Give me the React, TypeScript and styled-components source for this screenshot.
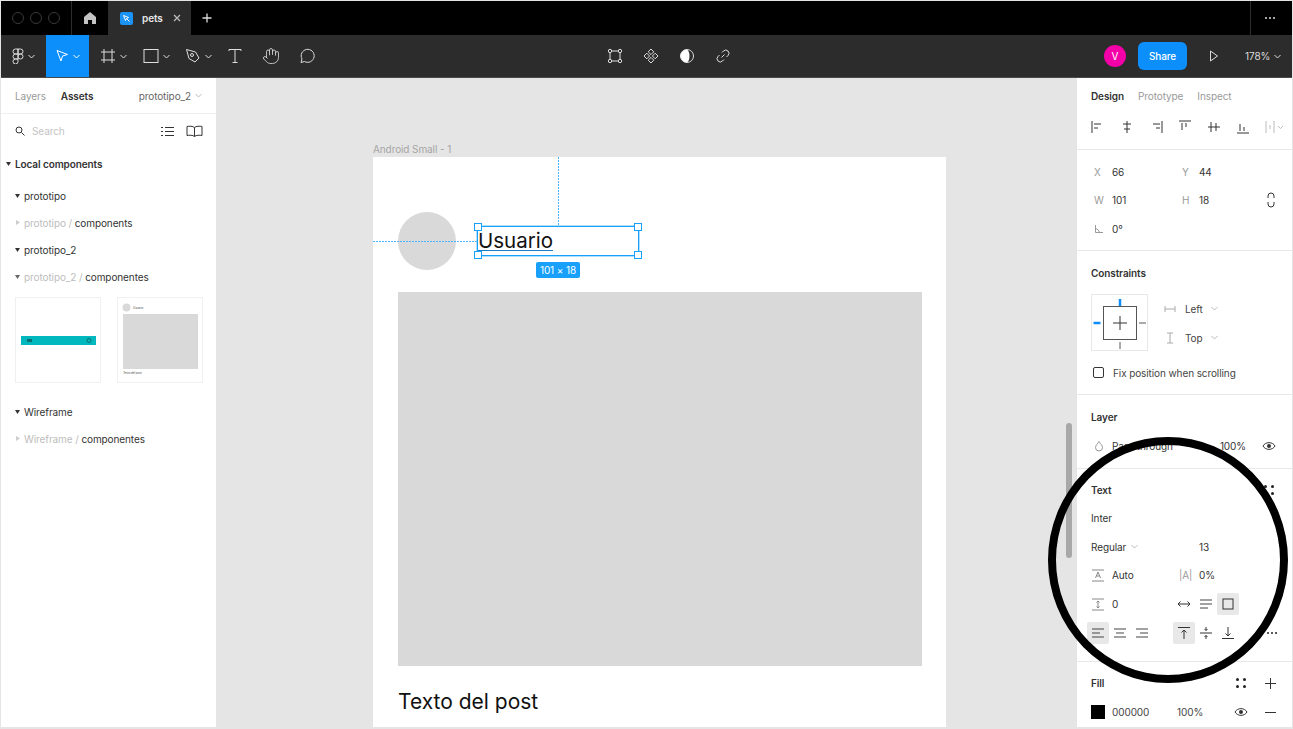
import React from 'react';
import styled, { createGlobalStyle } from 'styled-components';
import { Hand } from 'lucide-react';

const Global = createGlobalStyle`
  html, body { margin: 0; padding: 0; background: #e5e5e5; }
  body { font-family: Inter, "Liberation Sans", sans-serif; -webkit-font-smoothing: antialiased; }
  * { box-sizing: border-box; }
`;

const Page = styled.div`
  position: relative; width: 1293px; height: 729px; overflow: hidden;
  padding: 1px 1px 2px; display: flex; flex-direction: column; background: #e5e5e5;
  font-size: 10px; letter-spacing: -0.1px; color: #333;
`;

/* tab bar */
const TabBar = styled.div`height: 34px; background: #000; display: flex; align-items: stretch; flex: none;`;
const Lights = styled.div`width: 71px; display: flex; align-items: center; gap: 6px; padding-left: 11px; border-right: 1px solid #2c2c2c;`;
const Light = styled.i`width: 12px; height: 12px; border-radius: 50%; border: 1px solid #3a3a3a; display: block;`;
const HomeTab = styled.div`width: 36px; display: flex; align-items: center; justify-content: center;`;
const FileTab = styled.div`width: 83px; background: #2c2c2c; display: flex; align-items: center; padding-left: 12px; color: #e8e8e8; font-weight: 600; gap: 9px; font-size: 10px;`;
const FileIcon = styled.span`width: 13px; height: 13px; border-radius: 2px; background: #1b92f5; display: flex; align-items: center; justify-content: center;`;
const CloseMark = styled.span`margin-left: 1px; display: flex;`;
const AddTab = styled.div`width: 32px; display: flex; align-items: center; justify-content: center;`;
const TabSpacer = styled.div`flex: 1;`;
const MoreTab = styled.div`width: 42px; padding-right: 4px; border-left: 1px solid #2c2c2c; display: flex; align-items: center; justify-content: center; gap: 2px;`;
const Dot = styled.i<{ $c?: string }>`width: 2px; height: 2px; border-radius: 50%; background: ${p => p.$c || '#ddd'}; display: block;`;

/* toolbar */
const ToolBar = styled.div`height: 43px; background: #2c2c2c; display: flex; align-items: stretch; flex: none; border-bottom: 1px solid #4a4a4a; color: #fff;`;
const ToolGroup = styled.div<{ $w?: number }>`display: flex; align-items: stretch; ${p => p.$w ? `width: ${p.$w}px;` : ''}`;
const Tool = styled.div<{ $w: number; $active?: boolean }>`
  width: ${p => p.$w}px; display: flex; align-items: center; justify-content: center; gap: 4px;
  background: ${p => p.$active ? '#0d8ffb' : 'transparent'};
`;
const Avatar = styled.div`width: 22px; height: 22px; border-radius: 50%; background: #f400a8; color: #fff; display: flex; align-items: center; justify-content: center; font-size: 10px; align-self: center;`;
const Share = styled.div`width: 49px; height: 28px; margin-left: 12px; background: #0d8ffb; border-radius: 6px; font-size: 10px; color: #fff; display: flex; align-items: center; justify-content: center; align-self: center; font-weight: 500;`;
const Zoomer = styled.div`display: flex; align-items: center; gap: 4px; font-size: 10px; color: #ddd; margin-left: 4px;`;

/* body */
const Body = styled.div`flex: 1; display: flex; min-height: 0;`;
const Left = styled.aside`width: 215px; background: #fff; flex: none; display: flex; flex-direction: column;`;
const LeftHead = styled.div`height: 36px; display: flex; align-items: center; padding: 0 14px; border-bottom: 1px solid #eee; gap: 15px; flex: none;`;
const Tab = styled.span<{ $on?: boolean }>`font-weight: ${p => p.$on ? 600 : 400}; color: ${p => p.$on ? '#333' : '#9a9a9a'};`;
const PageSel = styled.span`margin-left: auto; color: #666; display: flex; align-items: center; gap: 4px;`;
const SearchRow = styled.div`height: 34px; display: flex; align-items: center; padding: 0 13px 0 14px; color: #c4c4c4; gap: 7px;`;
const SearchTools = styled.span`margin-left: auto; display: flex; gap: 12px; align-items: center;`;
const Tree = styled.div<{ $ind: number; $bold?: boolean; $mt?: number }>`
  height: 27px; display: flex; align-items: center; padding-left: ${p => p.$ind}px; gap: 4px; margin-top: ${p => p.$mt || 0}px;
  font-weight: ${p => p.$bold ? 600 : 400}; color: #333; white-space: pre;
`;
const Faint = styled.span`color: #bdbdbd;`;
const Thumbs = styled.div`display: flex; gap: 16px; padding: 7px 0 0 14px; height: 108px; flex: none;`;
const Thumb = styled.div`width: 86px; height: 86px; border: 1px solid #f0f0f0; background: #fff; display: flex;`;

/* canvas */
const Canvas = styled.main`flex: 1; position: relative; background: #e5e5e5; overflow: hidden; min-width: 0;`;
const FrameLabel = styled.span`position: absolute; left: 157px; top: 65px; color: #a6a6a6;`;
const Frame = styled.div`position: absolute; left: 157px; top: 79px; width: 573px; height: 680px; background: #fff;`;
const Circle = styled.div`position: absolute; left: 25px; top: 55px; width: 58px; height: 58px; border-radius: 50%; background: #d9d9d9;`;
const Photo = styled.div`position: absolute; left: 25px; top: 135px; width: 524px; height: 374px; background: #d9d9d9;`;
const PostText = styled.div`position: absolute; left: 25px; top: 532px; font-size: 21px; letter-spacing: 0; color: #111; white-space: nowrap;`;
const UserText = styled.div`position: absolute; left: 105px; top: 70px; font-size: 20.5px; letter-spacing: 0; line-height: 27px; color: #111; text-decoration: underline; text-decoration-color: #1a7fc4; text-decoration-thickness: 1px; text-underline-offset: 2px;`;
const Selection = styled.div`position: absolute; left: 104px; top: 69px; width: 162px; height: 30px; border: 1px solid #18a0fb; box-shadow: 0 0 0 .6px #7cc8fc;`;
const Handle = styled.i<{ $x: 'l' | 'r'; $y: 't' | 'b' }>`
  position: absolute; width: 8px; height: 8px; background: #fff; border: 1px solid #18a0fb;
  ${p => p.$x === 'l' ? 'left: -4px;' : 'right: -4px;'}
  ${p => p.$y === 't' ? 'top: -4px;' : 'bottom: -4px;'}
`;
const GuideH = styled.div`position: absolute; left: 0; top: 84px; width: 104px; height: 1px; background: repeating-linear-gradient(90deg, #4db5fb 0 2px, transparent 2px 3px);`;
const GuideV = styled.div`position: absolute; left: 185px; top: 0; height: 69px; width: 1px; background: repeating-linear-gradient(180deg, #4db5fb 0 2px, transparent 2px 3px);`;
const SizeTag = styled.div`position: absolute; left: 163px; top: 105px; width: 44px; height: 16px; background: #18a0fb; color: #fff; font-size: 10px; border-radius: 2px; display: flex; align-items: center; justify-content: center;`;
const ScrollThumb = styled.div`position: absolute; right: 5px; top: 345px; width: 6px; height: 135px; border-radius: 3px; background: #a8a8a8;`;

/* right */
const Right = styled.aside`width: 215px; background: #fff; flex: none; display: flex; flex-direction: column;`;
const Section = styled.section<{ $pt?: number; $pb?: number; $last?: boolean }>`
  padding: ${p => p.$pt ?? 7}px 0 ${p => p.$pb ?? 7}px 14px; flex: none;
  border-bottom: ${p => p.$last ? 'none' : '1px solid #e8e8e8'};
`;
const RightTabs = styled.div`height: 36px; display: flex; align-items: center; gap: 14px;`;
const AlignRow = styled.div`height: 26px; display: flex; align-items: center; gap: 13px; margin-left: -1px;`;
const Row = styled.div<{ $h?: number }>`
  height: ${p => p.$h ?? 29}px; display: grid; grid-template-columns: 21px 67px 20px 1fr 34px; align-items: center; color: #333; padding-right: 15px;
  & > svg { justify-self: end; margin-right: 1px; }
`;
const Lbl = styled.span<{ $flush?: boolean }>`color: #9a9a9a; display: flex; align-items: center; white-space: nowrap; padding-left: ${p => p.$flush ? 0 : 3}px;`;
const Title = styled.div<{ $pr?: number }>`height: 29px; display: flex; align-items: center; justify-content: space-between; font-weight: 600; color: #333; padding-right: ${p => p.$pr ?? 16}px;`;
const Constraint = styled.div`display: flex; height: 71px; padding-top: 7px; gap: 16px;`;
const ConstraintBox = styled.div`width: 57px; height: 57px; border: 1px solid #e8e8e8; flex: none;`;
const ConstraintOpts = styled.div`display: flex; flex-direction: column;`;
const ConstraintOpt = styled.div`height: 29px; display: flex; align-items: center; gap: 8px; color: #444;`;
const OptName = styled.span`margin-left: 1px;`;
const Check = styled.i`width: 11px; height: 11px; border: 1px solid #333; border-radius: 2px; display: block;`;
const FixRow = styled.div`height: 29px; display: flex; align-items: center; gap: 9px; padding-left: 2px; color: #444;`;
const NoWrap = styled.span`white-space: nowrap;`;
const PctCell = styled.span`text-align: right; white-space: nowrap; margin-right: -3px;`;
const IconBtn = styled.span<{ $on?: boolean }>`width: 22px; height: 22px; border-radius: 2px; display: flex; align-items: center; justify-content: center; background: ${p => p.$on ? '#e8e8e8' : 'transparent'};`;
const Cluster = styled.span<{ $col?: string; $ml?: number; $gap?: number; $end?: boolean }>`
  display: flex; align-items: center;
  ${p => p.$col ? `grid-column: ${p.$col};` : ''}
  ${p => p.$ml ? `margin-left: ${p.$ml}px;` : ''}
  ${p => p.$gap ? `gap: ${p.$gap}px;` : ''}
  ${p => p.$end ? 'justify-self: end;' : ''}
`;
const StyleDots = styled.span`display: grid; grid-template-columns: 3px 3px; gap: 4px;`;
const BigDot = styled.i`width: 3px; height: 3px; border-radius: 50%; background: #222; display: block;`;
const Swatch = styled.i`width: 14px; height: 14px; background: #000; display: block;`;
const FillRow = styled.div`height: 29px; display: flex; align-items: center; color: #444; padding-right: 16px;`;
const HexVal = styled.span`margin-left: 7px; width: 65px;`;
const Pct = styled.span`flex: 1;`;
const Ring = styled.div`position: absolute; left: 1048px; top: 437px; width: 240px; height: 246px; border-radius: 50%; border: 8px solid #000; pointer-events: none;`;

const S = { stroke: '#ddd', fill: 'none', strokeWidth: 1 } as const;
const Chev = ({ c = '#ddd' }: { c?: string }) => (
  <svg width="7" height="5" viewBox="0 0 7 5" fill="none" stroke={c}><path d="M.5 1l3 3 3-3" /></svg>
);
const Dk = { stroke: '#333', fill: 'none', strokeWidth: 1 } as const;
const Ico = ({ children, w = 16, h = 16 }: { children: React.ReactNode; w?: number; h?: number }) => (
  <svg width={w} height={h} viewBox={`0 0 ${w} ${h}`}>{children}</svg>
);
const Eye = () => (
  <Ico w={14} h={10}><path d="M1 5c2.500-4.500 9.500-4.500 12 0-2.500 4.500-9.500 4.500-12 0z" {...Dk} /><circle cx="7" cy="5" r="2" fill="#333" /></Ico>
);
const Dots4 = () => <StyleDots><BigDot /><BigDot /><BigDot /><BigDot /></StyleDots>;
const Down = ({ c = '#333' }: { c?: string }) => <Ico w={5} h={4}><path d="M0 0h5L2.500 4z" fill={c} /></Ico>;
const Side = () => <Ico w={5} h={5}><path d="M1 0l4 2.500L1 5z" fill="#ccc" /></Ico>;

const aligns = [
  'M2 2v12M4 5h7M4 9h4',
  'M8 2v12M4 5h8M5 10h6',
  'M14 2v12M5 5h7M8 9h4',
  'M2 2h12M5 4v7M9 4v4',
  'M2 8h12M5 3v10M10 4v8',
  'M2 14h12M5 5v7M9 8v4',
];

export default function App() {
  return (
    <Page>
      <Global />
      <TabBar>
        <Lights><Light /><Light /><Light /></Lights>
        <HomeTab>
          <Ico w={14} h={14}><path d="M7 1l6 5v7H9V9H5v4H1V6z" fill="#c4c4c4" /></Ico>
        </HomeTab>
        <FileTab>
          <FileIcon><Ico w={9} h={9}><path d="M1.500 1.500l5 2-2 1-1 2zM5 5l2.500 2.500" fill="none" stroke="#fff" /></Ico></FileIcon>
          pets
          <CloseMark><Ico w={8} h={8}><path d="M1 1l6 6M7 1l-6 6" stroke="#bbb" strokeWidth="1.300" /></Ico></CloseMark>
        </FileTab>
        <AddTab><Ico w={10} h={10}><path d="M5 .5v9M.5 5h9" stroke="#ddd" strokeWidth="1.300" /></Ico></AddTab>
        <TabSpacer />
        <MoreTab><Dot /><Dot /><Dot /></MoreTab>
      </TabBar>

      <ToolBar>
        <ToolGroup $w={601}>
          <Tool $w={45}>
            <Ico w={12} h={16}>
              <g {...S}><path d="M6 1H3.500a2.500 2.500 0 000 5H6zM6 1h2.500a2.500 2.500 0 010 5H6zM6 6H3.500a2.500 2.500 0 000 5H6zM6 11H3.500A2.500 2.500 0 106 13.500z" /><circle cx="8.500" cy="8.500" r="2.500" /></g>
            </Ico>
            <Chev />
          </Tool>
          <Tool $w={43} $active>
            <Ico w={14} h={14}><path d="M2 1.500l10.500 4-5 1.500-1.500 5z" {...S} stroke="#fff" /></Ico>
            <Chev c="#fff" />
          </Tool>
          <Tool $w={49}>
            <Ico><path d="M4 1v14M12 1v14M1 4h14M1 12h14" {...S} /></Ico>
            <Chev />
          </Tool>
          <Tool $w={36}>
            <Ico><rect x="1" y="1.500" width="14" height="13" {...S} /></Ico>
            <Chev />
          </Tool>
          <Tool $w={48}>
            <Ico><g {...S}><path d="M1.500 1.500l9 2.500 3.500 6-4 4-6-3.500z" /><circle cx="7" cy="7" r="1.500" /></g></Ico>
            <Chev />
          </Tool>
          <Tool $w={25}>
            <Ico><path d="M2 3V1.500h12V3M8 1.500v13M5.500 14.500h5" {...S} /></Ico>
          </Tool>
          <Tool $w={47}>
            <Hand size={18} strokeWidth={1.1} color="#ddd" />
          </Tool>
          <Tool $w={25}>
            <Ico><path d="M2 14.500l1-3.500a6.500 6.500 0 112.500 2.500z" {...S} /></Ico>
          </Tool>
        </ToolGroup>
        <ToolGroup $w={502}>
          <Tool $w={26}>
            <Ico><g {...S}><rect x="3" y="3" width="10" height="10" /><circle cx="3" cy="3" r="1.700" fill="#2c2c2c" /><circle cx="13" cy="3" r="1.700" fill="#2c2c2c" /><circle cx="3" cy="13" r="1.700" fill="#2c2c2c" /><circle cx="13" cy="13" r="1.700" fill="#2c2c2c" /></g></Ico>
          </Tool>
          <Tool $w={46}>
            <Ico><g {...S}><path d="M8 1l2.800 2.800L8 6.600 5.200 3.800zM8 9.400l2.800 2.800L8 15l-2.800-2.800zM3.800 5.200L6.600 8l-2.800 2.800L1 8zM12.200 5.200L15 8l-2.800 2.800L9.400 8z" /></g></Ico>
          </Tool>
          <Tool $w={26}>
            <Ico><circle cx="8" cy="8" r="6.500" stroke="#ddd" fill="none" /><path d="M8 1.500a6.500 6.500 0 000 13c2-1.500 2.500-4 2.500-6.500S10 3 8 1.500z" fill="#fff" /></Ico>
          </Tool>
          <Tool $w={45}>
            <Ico><path d="M6.500 9.500l3-3M7 4.500l1.500-1.500a3 3 0 014.500 4.500L11.500 9M9 11.500L7.500 13A3 3 0 013 8.500L4.500 7" {...S} /></Ico>
          </Tool>
        </ToolGroup>
        <Avatar>V</Avatar>
        <Share>Share</Share>
        <Tool $w={54}>
          <Ico w={10} h={12}><path d="M1.500 1l7 5-7 5z" {...S} /></Ico>
        </Tool>
        <Zoomer>178%<Chev /></Zoomer>
      </ToolBar>

      <Body>
        <Left>
          <LeftHead>
            <Tab>Layers</Tab><Tab $on>Assets</Tab>
            <PageSel>prototipo_2 <Chev c="#bbb" /></PageSel>
          </LeftHead>
          <SearchRow>
            <Ico w={10} h={10}><circle cx="4" cy="4" r="3" {...Dk} /><path d="M6.500 6.500L9.500 9.500" {...Dk} /></Ico>
            Search
            <SearchTools>
              <Ico w={13} h={11}><path d="M0 1.500h2M4 1.500h9M0 5.500h2M4 5.500h9M0 9.500h2M4 9.500h9" {...Dk} /></Ico>
              <Ico w={17} h={12}><path d="M8.500 2.500C7 1 3 1 1 1.500v9c2-.5 6-.5 7.500 1 1.500-1.500 5.500-1.500 7.500-1v-9c-2-.5-6-.5-7.500 1zM8.500 2.500v9" {...Dk} /></Ico>
            </SearchTools>
          </SearchRow>
          <Tree $ind={5} $bold $mt={2}><Down />Local components</Tree>
          <Tree $ind={14} $mt={5}><Down />prototipo</Tree>
          <Tree $ind={14}><Side /><span><Faint>prototipo / </Faint>components</span></Tree>
          <Tree $ind={14}><Down />prototipo_2</Tree>
          <Tree $ind={14}><Down c="#666" /><span><Faint>prototipo_2 / </Faint>componentes</span></Tree>
          <Thumbs>
            <Thumb>
              <svg width="84" height="84" viewBox="0 0 84 84">
                <rect x="5" y="38" width="75" height="9" fill="#00b8bd" />
                <rect x="11" y="41" width="5" height="3" fill="#0a6f72" />
                <circle cx="73" cy="42.500" r="2" fill="none" stroke="#0a6f72" />
              </svg>
            </Thumb>
            <Thumb>
              <svg width="84" height="84" viewBox="0 0 84 84">
                <circle cx="8.500" cy="9.500" r="4" fill="#d9d9d9" />
                <text x="15" y="11" fontSize="3" fill="#555" fontFamily="Inter">Usuario</text>
                <rect x="5" y="16" width="75" height="55" fill="#d9d9d9" />
                <text x="5" y="76" fontSize="3" fill="#555" fontFamily="Inter">Texto del post</text>
              </svg>
            </Thumb>
          </Thumbs>
          <Tree $ind={14}><Down />Wireframe</Tree>
          <Tree $ind={14}><Side /><span><Faint>Wireframe / </Faint>componentes</span></Tree>
        </Left>

        <Canvas>
          <FrameLabel>Android Small - 1</FrameLabel>
          <Frame>
            <Circle />
            <Photo />
            <PostText>Texto del post</PostText>
            <UserText>Usuario</UserText>
            <GuideH />
            <GuideV />
            <Selection>
              <Handle $x="l" $y="t" /><Handle $x="r" $y="t" /><Handle $x="l" $y="b" /><Handle $x="r" $y="b" />
            </Selection>
            <SizeTag>101 × 18</SizeTag>
          </Frame>
          <ScrollThumb />
        </Canvas>

        <Right>
          <Section $pt={0} $pb={9}>
            <RightTabs><Tab $on>Design</Tab><Tab>Prototype</Tab><Tab>Inspect</Tab></RightTabs>
            <AlignRow>
              {aligns.map(d => <Ico key={d}><path d={d} {...Dk} /></Ico>)}
              <Ico w={20} h={16}><path d="M2 2v12M10 2v12M6 6v4" stroke="#bbb" fill="none" /><path d="M14 7l2.500 2.500L19 7" stroke="#bbb" fill="none" /></Ico>
            </AlignRow>
          </Section>
          <Section $pt={7.5} $pb={7}>
            <Row $h={28.5}><Lbl>X</Lbl><span>66</span><Lbl>Y</Lbl><span>44</span></Row>
            <Row $h={28.5}>
              <Lbl>W</Lbl><span>101</span><Lbl>H</Lbl><span>18</span>
              <Ico w={10} h={16}><path d="M2 6V4a3 3 0 016 0v2M2 10v2a3 3 0 006 0v-2" {...Dk} /></Ico>
            </Row>
            <Row $h={28.5}><Lbl><Ico w={10} h={10}><path d="M1.500 1v7.500H9M1.500 4.500c2 .5 3.500 2 4 4" stroke="#999" fill="none" /></Ico></Lbl><span>0°</span></Row>
          </Section>
          <Section $pb={7}>
            <Title>Constraints</Title>
            <Constraint>
              <ConstraintBox>
                <svg width="55" height="55" viewBox="0 0 55 55">
                  <rect x="11.500" y="11.500" width="33" height="33" fill="none" stroke="#555" />
                  <path d="M28 21v14M21 28h14" stroke="#333" />
                  <path d="M28 4v7" stroke="#0d8ffb" strokeWidth="2.500" />
                  <path d="M1.500 28h7" stroke="#0d8ffb" strokeWidth="2.500" />
                  <path d="M47 28h7M28 47v7" stroke="#555" />
                </svg>
              </ConstraintBox>
              <ConstraintOpts>
                <ConstraintOpt>
                  <Ico w={12} h={10}><path d="M1 2v6M11 2v6M1 5h10" stroke="#aaa" fill="none" /></Ico>
                  <OptName>Left</OptName> <Chev c="#bbb" />
                </ConstraintOpt>
                <ConstraintOpt>
                  <Ico w={12} h={12}><path d="M3 1h6M3 11h6M6 1v10" stroke="#aaa" fill="none" /></Ico>
                  <OptName>Top</OptName> <Chev c="#bbb" />
                </ConstraintOpt>
              </ConstraintOpts>
            </Constraint>
            <FixRow><Check />Fix position when scrolling</FixRow>
          </Section>
          <Section $pb={8}>
            <Title>Layer</Title>
            <Row>
              <Lbl><Ico w={10} h={12}><path d="M5 1.500C3.500 4 1.500 5.500 1.500 7.500a3.500 3.500 0 007 0C8.500 5.500 6.500 4 5 1.500z" stroke="#999" fill="none" /></Ico></Lbl>
              <NoWrap>Pass through</NoWrap>
              <span />
              <PctCell>100%</PctCell>
              <Eye />
            </Row>
          </Section>
          <Section $pt={6} $pb={14}>
            <Title $pr={18}><span>Text</span><Dots4 /></Title>
            <Row $h={28.6}>Inter</Row>
            <Row $h={28.6}>
              <Cluster $col="1 / 3" $gap={5}>Regular <Chev c="#bbb" /></Cluster>
              <span />
              <span>13</span>
            </Row>
            <Row $h={28.6}>
              <Lbl $flush><Ico w={14} h={14}><path d="M1 13h12M1 2h12M4.500 10L7 4l2.500 6M5.500 8h3" stroke="#888" fill="none" /></Ico></Lbl>
              <span>Auto</span>
              <Lbl $flush>|A|</Lbl>
              <span>0%</span>
            </Row>
            <Row $h={28.6}>
              <Lbl $flush><Ico w={14} h={14}><path d="M1 2h12M1 13h12M7 4v7M5.500 5.500L7 4l1.500 1.500M5.500 9.500L7 11l1.500-1.500" stroke="#888" fill="none" /></Ico></Lbl>
              <span>0</span>
              <Cluster $col="3 / 6" $ml={-6}>
                <IconBtn><Ico w={14} h={8}><path d="M1 4h12M3.500 1.500L1 4l2.500 2.500M10.500 1.500L13 4l-2.500 2.500" {...Dk} /></Ico></IconBtn>
                <IconBtn><Ico w={14} h={10}><path d="M1 1h12M1 5h12M1 9h8" stroke="#444" fill="none" /></Ico></IconBtn>
                <IconBtn $on><Ico w={12} h={12}><rect x="1" y="1" width="10" height="10" {...Dk} /></Ico></IconBtn>
              </Cluster>
            </Row>
            <Row $h={28.6}>
              <Cluster $col="1 / 3" $ml={-4}>
                <IconBtn $on><Ico w={14} h={10}><path d="M1 1h12M1 5h8M1 9h12" stroke="#444" fill="none" /></Ico></IconBtn>
                <IconBtn><Ico w={14} h={10}><path d="M1 1h12M3 5h8M1 9h12" stroke="#444" fill="none" /></Ico></IconBtn>
                <IconBtn><Ico w={14} h={10}><path d="M1 1h12M5 5h8M1 9h12" stroke="#444" fill="none" /></Ico></IconBtn>
              </Cluster>
              <Cluster $col="3 / 5" $ml={-6}>
                <IconBtn $on><Ico w={14} h={14}><path d="M1 1.500h12M7 13V4M4.500 6.500L7 4l2.500 2.500" {...Dk} /></Ico></IconBtn>
                <IconBtn><Ico w={14} h={14}><path d="M1 7h12M7 1v3.500M7 9.500V13M5.500 3L7 4.500 8.500 3M5.500 11L7 9.500 8.500 11" {...Dk} /></Ico></IconBtn>
                <IconBtn><Ico w={14} h={14}><path d="M1 12.500h12M7 1v9M4.500 7.500L7 10l2.500-2.500" {...Dk} /></Ico></IconBtn>
              </Cluster>
              <Cluster $gap={2} $end><Dot $c="#222" /><Dot $c="#222" /><Dot $c="#222" /></Cluster>
            </Row>
          </Section>
          <Section $pb={0} $last>
            <Title>
              <span>Fill</span>
              <Cluster $gap={19}>
                <Dots4 />
                <Ico w={11} h={11}><path d="M5.500 0v11M0 5.500h11" stroke="#333" /></Ico>
              </Cluster>
            </Title>
            <FillRow>
              <Swatch />
              <HexVal>000000</HexVal>
              <Pct>100%</Pct>
              <Cluster $gap={17}>
                <Eye />
                <Ico w={11} h={3}><path d="M0 1.500h11" stroke="#333" /></Ico>
              </Cluster>
            </FillRow>
          </Section>
        </Right>
      </Body>
      <Ring />
    </Page>
  );
}
